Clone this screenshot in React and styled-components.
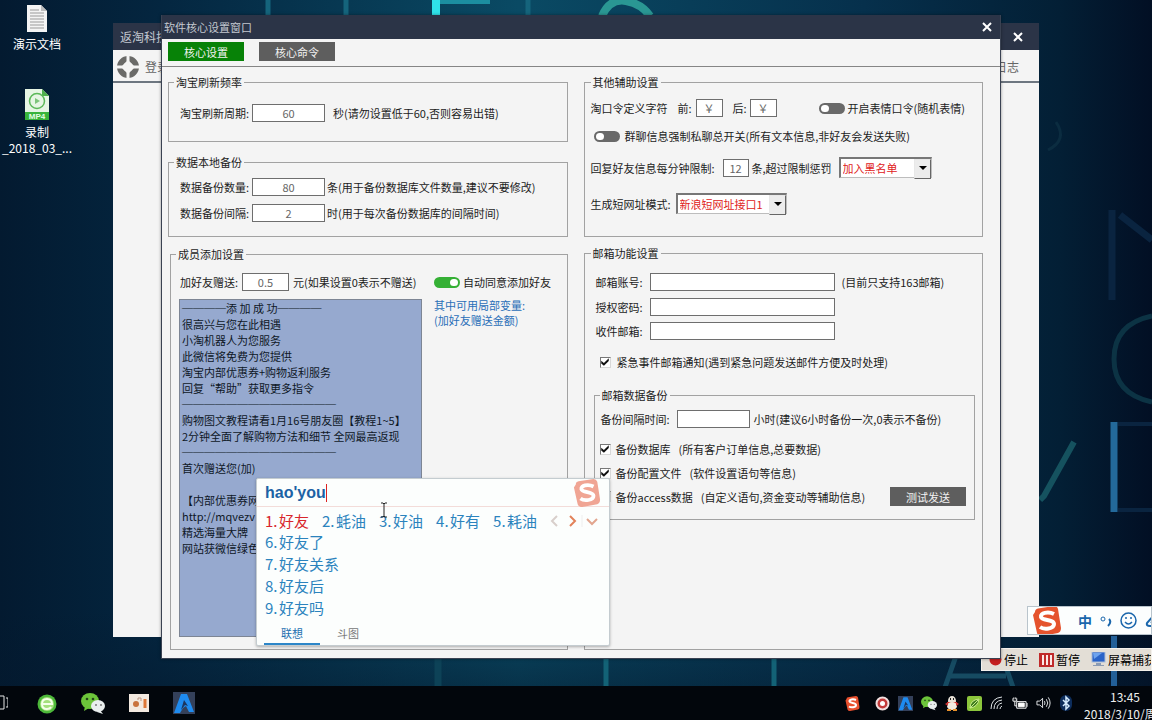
import React, { useState } from "react";
import styled, { createGlobalStyle, css } from "styled-components";

const TEMPLATE = `────添 加 成 功────
很高兴与您在此相遇
小淘机器人为您服务
此微信将免费为您提供
淘宝内部优惠券+购物返利服务
回复“帮助”获取更多指令
──────────────
购物图文教程请看1月16号朋友圈【教程1~5】
2分钟全面了解购物方法和细节 全网最高返现
──────────────
首次赠送您(加)

【内部优惠券网
http://mqvezv
精选海量大牌
网站获微信绿色`;

const candidates = ["好友", "蚝油", "好油", "好有", "耗油"];
const phrases = ["好友了", "好友关系", "好友后", "好友吗"];

/* Icons */
const SogouLogo = ({ size, color }) => (
  <svg width={size} height={size} viewBox="0 0 30 30">
    <path d="M3 6Q3 3 6 2.500L22 0Q25 0 26 3L29 22Q29 26 26 27L10 30Q6 30 5 27L1 9Z" fill={color} />
    <path
      d="M22 8C16 5 8 7 9 11C10 15 22 13 22 18C22 23 12 24 8 21"
      fill="none"
      stroke="#fff"
      strokeWidth="4"
    />
  </svg>
);

const WechatIcon = ({ size }) => (
  <svg width={size} height={size} viewBox="0 0 24 24">
    <ellipse cx="9" cy="10" rx="9" ry="8" fill="#6cc43a" />
    <path d="M4 15l-1 5 5-3z" fill="#6cc43a" />
    <circle cx="6" cy="8" r="1.300" fill="#24451a" />
    <circle cx="12" cy="8" r="1.300" fill="#24451a" />
    <ellipse cx="17" cy="15" rx="7" ry="6" fill="#e9eeee" />
    <path d="M19 19l3 4-6-2z" fill="#e9eeee" />
    <circle cx="15" cy="14" r="1" fill="#777" />
    <circle cx="20" cy="14" r="1" fill="#777" />
  </svg>
);

const ArrowAppIcon = ({ size }) => (
  <svg width={size} height={size} viewBox="0 0 22 22">
    <rect width="22" height="22" fill="#34405a" />
    <path d="M8 2h6l7 18h-5l-3-6-3 2-3 5H1z" fill="#1e8bf0" />
    <path d="M11 8l4 6-3-1-4 5z" fill="#1c3660" />
  </svg>
);

const DocIcon = () => (
  <svg width="20" height="27" viewBox="0 0 20 27">
    <path d="M0 0h14l6 6v21H0z" fill="#f4f4f4" />
    <path d="M14 0v6h6z" fill="#bcbcbc" />
    <path d="M3 5h9M3 8h14M3 11h14M3 14h14M3 17h14M3 20h14M3 23h14" stroke="#9a9a9a" />
  </svg>
);

const Mp4Icon = () => (
  <svg width="24" height="31" viewBox="0 0 24 31">
    <path d="M0 0h17l7 7v24H0z" fill="#e6f5e4" />
    <path d="M17 0v7h7z" fill="#4fae4c" />
    <path d="M0 23h24v8H0z" fill="#38b43a" />
    <circle cx="12" cy="12" r="7.500" fill="none" stroke="#5bb858" strokeWidth="1.500" />
    <path d="M10 9l5 3-5 3z" fill="#7cc47a" />
    <text x="12" y="30" fontSize="8" fontWeight="700" fill="#e6ffe6" textAnchor="middle" fontFamily="Liberation Sans, sans-serif">
      MP4
    </text>
  </svg>
);

/* Ring of four arcs around a square hole */
const LoginIcon = () => (
  <svg width="22" height="22" viewBox="0 0 22 22">
    <circle cx="11" cy="11" r="8" fill="none" stroke="#6a6a68" strokeWidth="6" />
    <path d="M11 0v22M0 11h22" stroke="#f4f4f4" strokeWidth="3" />
    <path d="M11 4l7 7-7 7-7-7z" fill="#f4f4f4" />
  </svg>
);

const CloseIcon = () => (
  <svg width="10" height="10" viewBox="0 0 10 10">
    <path d="M1 1l8 8M9 1l-8 8" stroke="#fff" strokeWidth="2" />
  </svg>
);

const Wallpaper = () => (
  <Backdrop viewBox="0 0 1152 720" preserveAspectRatio="none" aria-hidden="true">
    <defs>
      <linearGradient id="night" x1="0" y1="0" x2="1" y2="0">
        <stop offset="0" stopColor="#031a30" />
        <stop offset="0.140" stopColor="#042640" />
        <stop offset="0.450" stopColor="#0a4a64" />
        <stop offset="0.750" stopColor="#06304c" />
        <stop offset="0.920" stopColor="#031f35" />
        <stop offset="1" stopColor="#020f24" />
      </linearGradient>
      <linearGradient id="shade" x1="0" y1="0" x2="0" y2="1">
        <stop offset="0.850" stopColor="#04192e" stopOpacity="0" />
        <stop offset="1" stopColor="#04192e" stopOpacity="0.700" />
      </linearGradient>
    </defs>
    <rect width="1152" height="720" fill="url(#night)" />
    <rect width="1152" height="720" fill="url(#shade)" />
    <g fill="none">
      <path d="M436 0v16" stroke="#2fe3ea" strokeWidth="8" />
      <path d="M440 2h50" stroke="#1c8ea0" strokeWidth="4" />
      <path d="M268 0v16M346 0v16M528 0v16" stroke="#15647c" strokeWidth="5" />
      <path d="M602 16q8-18 24-15t24 15" stroke="#2a9793" strokeWidth="8" />
      <path d="M1112 210v90M1120 215l32 25" stroke="#0a2440" strokeWidth="7" />
      <path d="M1152 316q-38 8-38 43t38 43" stroke="#0c3344" strokeWidth="5" />
      <path d="M1114 422v90" stroke="#23699a" strokeWidth="7" />
      <path d="M1118 424h34M1118 510h34" stroke="#0a2440" strokeWidth="4" />
      <path d="M1040 500l4-4 30-54" stroke="#15525f" strokeWidth="6" />
      <path d="M1048 150q20-10 8-28" stroke="#0b2c40" strokeWidth="3" />
      <path d="M1114 636v54" stroke="#225f98" strokeWidth="6" />
      <path d="M606 656v34M774 656v34" stroke="#136276" strokeWidth="5" />
      <path d="M438 656v34" stroke="#0d4257" strokeWidth="7" />
      <path d="M944 690l12-34M1002 656l12 34M950 676h56" stroke="#164b62" strokeWidth="5" />
    </g>
  </Backdrop>
);

const NumberField = ({ label, value, width, labelWidth, suffix, gap }) => (
  <>
    <Label $w={labelWidth}>
      <span>{label}</span>
    </Label>
    <Field aria-label={label} defaultValue={value} $w={width} />
    <Text $left={gap}>{suffix}</Text>
  </>
);

const BlackSelect = ({ label, options, width }) => (
  <SelectBox $w={width}>
    <select aria-label={label}>
      {options.map((option) => (
        <option key={option}>{option}</option>
      ))}
    </select>
  </SelectBox>
);

const SettingsWindow = () => {
  const [autoAgree, setAutoAgree] = useState(true);

  return (
    <Dialog>
      <TitleBar>
        <span>软件核心设置窗口</span>
        <CloseButton aria-label="关闭">
          <CloseIcon />
        </CloseButton>
      </TitleBar>
      <Tabs>
        <FlatButton $active>核心设置</FlatButton>
        <FlatButton>核心命令</FlatButton>
      </Tabs>

      <Columns>
        <Column>
          <Group $pad="15px 10px 19px 5px">
            <legend>淘宝刷新频率</legend>
            <Row $left={6}>
              <NumberField label="淘宝刷新周期:" value="60" width={73} labelWidth={72} gap={8} suffix="秒(请勿设置低于60,否则容易出错)" />
            </Row>
          </Group>

          <Group $top={13} $pad="9px 10px 14px 5px">
            <legend>数据本地备份</legend>
            <Row $left={6}>
              <NumberField label="数据备份数量:" value="80" width={73} labelWidth={72} gap={2} suffix="条(用于备份数据库文件数量,建议不要修改)" />
            </Row>
            <Row $top={8} $left={6}>
              <NumberField label="数据备份间隔:" value="2" width={73} labelWidth={72} gap={2} suffix="时(用于每次备份数据库的间隔时间)" />
            </Row>
          </Group>

          <Group $top={10} $left={2} $grow $pad="12px 10px 12px 5px">
            <legend>成员添加设置</legend>
            <MemberGrid>
              <div>
                <Row $left={1}>
                  <NumberField label="加好友赠送:" value="0.5" width={47} labelWidth={62} gap={4} suffix="元(如果设置0表示不赠送)" />
                </Row>
                <Template aria-label="添加成功回复" rows={21} defaultValue={TEMPLATE} spellCheck={false} />
              </div>
              <div>
                <Row>
                  <CheckLabel $gap={3}>
                    <Switch type="checkbox" checked={autoAgree} onChange={(e) => setAutoAgree(e.target.checked)} />
                    自动同意添加好友
                  </CheckLabel>
                </Row>
                <Hint>
                  其中可用局部变量:
                  <br />
                  (加好友赠送金额)
                </Hint>
              </div>
            </MemberGrid>
          </Group>
        </Column>

        <Column>
          <Group $pad="10px 8px 22px 6px">
            <legend>其他辅助设置</legend>
            <Row>
              <Label $w={87}>淘口令定义字符</Label>
              <Label $w={18}>前:</Label>
              <Field aria-label="前" defaultValue="￥" $w={27} />
              <Label $w={17} $left={10}>
                后:
              </Label>
              <Field aria-label="后" defaultValue="￥" $w={27} />
              <CheckLabel $left={42} $gap={3}>
                <Switch type="checkbox" />
                开启表情口令(随机表情)
              </CheckLabel>
            </Row>
            <Row $top={10}>
              <CheckLabel $left={3} $gap={5}>
                <Switch type="checkbox" />
                群聊信息强制私聊总开关(所有文本信息,非好友会发送失败)
              </CheckLabel>
            </Row>
            <Row $top={12}>
              <Label $w={132}>回复好友信息每分钟限制:</Label>
              <Field aria-label="回复好友信息每分钟限制" defaultValue="12" $w={26} />
              <Label $w={87} $left={3}>
                条,超过限制惩罚
              </Label>
              <BlackSelect label="超过限制惩罚" options={["加入黑名单"]} width={93} />
            </Row>
            <Row $top={15}>
              <Label $w={85}>生成短网址模式:</Label>
              <BlackSelect label="生成短网址模式" options={["新浪短网址接口1"]} width={111} />
            </Row>
          </Group>

          <Group $top={9} $grow $pad="13px 7px 12px 6px">
            <legend>邮箱功能设置</legend>
            <Row $left={5}>
              <NumberField label="邮箱账号:" value="" width={185} labelWidth={54} gap={7} suffix="(目前只支持163邮箱)" />
            </Row>
            <Row $left={5} $top={7}>
              <NumberField label="授权密码:" value="" width={185} labelWidth={54} />
            </Row>
            <Row $left={5} $top={6}>
              <NumberField label="收件邮箱:" value="" width={185} labelWidth={54} />
            </Row>
            <Row $top={13}>
              <CheckLabel $left={9} $gap={6}>
                <Tick type="checkbox" defaultChecked />
                紧急事件邮箱通知(遇到紧急问题发送邮件方便及时处理)
              </CheckLabel>
            </Row>

            <Group $top={17} $left={3} $pad="8px 8px 13px 5px">
              <legend>邮箱数据备份</legend>
              <Row $left={1}>
                <NumberField label="备份间隔时间:" value="" width={73} labelWidth={76} gap={4} suffix="小时(建议6小时备份一次,0表示不备份)" />
              </Row>
              <Row $top={12}>
                <CheckLabel $gap={5}>
                  <Tick type="checkbox" defaultChecked />
                  <Pair>
                    <span>备份数据库</span>
                    <span>(所有客户订单信息,总要数据)</span>
                  </Pair>
                </CheckLabel>
              </Row>
              <Row $top={6}>
                <CheckLabel $gap={5}>
                  <Tick type="checkbox" defaultChecked />
                  <Pair>
                    <span>备份配置文件</span>
                    <span>(软件设置语句等信息)</span>
                  </Pair>
                </CheckLabel>
              </Row>
              <Row $top={5}>
                <CheckLabel $gap={5}>
                  <Tick type="checkbox" />
                  <Pair>
                    <span>备份access数据</span>
                    <span>(自定义语句,资金变动等辅助信息)</span>
                  </Pair>
                </CheckLabel>
                <FlatButton $push>测试发送</FlatButton>
              </Row>
            </Group>
          </Group>
        </Column>
      </Columns>
    </Dialog>
  );
};

const InputPanel = () => (
  <Ime>
    <ImeHeader>
      <Pinyin>hao'you</Pinyin>
      <SogouLogo size={28} color="#f0a594" />
    </ImeHeader>
    <CandidateRow>
      {candidates.map((word, i) => (
        <Candidate key={word} $active={i === 0}>
          <b>{i + 1}.</b>
          {word}
        </Candidate>
      ))}
      <Pager viewBox="0 0 48 12" aria-hidden="true">
        <path d="M7 1L2 6l5 5" stroke="#d8cfcb" strokeWidth="2" />
        <path d="M20 1l5 5-5 5" stroke="#e2825a" strokeWidth="2" />
        <path d="M32 0v12" stroke="#eee" />
        <path d="M37 4l5 5 5-5" stroke="#e2a58e" strokeWidth="2" />
      </Pager>
    </CandidateRow>
    <PhraseList>
      {phrases.map((word, i) => (
        <li key={word}>
          <Candidate>
            <b>{i + 6}.</b>
            {word}
          </Candidate>
        </li>
      ))}
    </PhraseList>
    <ImeTabs>
      <ImeTab $active>联想</ImeTab>
      <ImeTab>斗图</ImeTab>
    </ImeTabs>
  </Ime>
);

const Tray = () => (
  <TrayBox>
    <SogouLogo size={15} color="#e8502e" />
    <svg width="15" height="15" viewBox="0 0 15 15">
      <circle cx="7.500" cy="7.500" r="6" fill="#c33a3a" stroke="#f0dede" strokeWidth="2" />
      <circle cx="7.500" cy="7.500" r="2.500" fill="#fff" />
    </svg>
    <ArrowAppIcon size={15} />
    <WechatIcon size={16} />
    <svg width="14" height="16" viewBox="0 0 14 16">
      <ellipse cx="7" cy="6" rx="4" ry="5" fill="#e9e2d8" />
      <path d="M2 7h10v3H2z" fill="#d2352c" />
      <ellipse cx="7" cy="11" rx="5" ry="4" fill="#f1eadf" />
      <path d="M0 9l3-2v4zM14 9l-3-2v4z" fill="#c33" />
      <path d="M2 15h4M8 15h4" stroke="#e8902a" strokeWidth="2" />
      <path d="M5 4h1M8 4h1" stroke="#222" strokeWidth="2" />
    </svg>
    <svg width="15" height="15" viewBox="0 0 15 15">
      <rect width="15" height="15" rx="2" fill="#8cc63c" />
      <path d="M3 12q0-8 9-9-1 8-9 9l8-8" fill="#3f7d1e" stroke="#c9ec8c" />
    </svg>
    <svg width="14" height="14" viewBox="0 0 14 14" fill="none" stroke="#dfe3e6">
      <path d="M1 13Q1 2 12 1M4 13Q4 5 12 4M7 13Q7 8 12 7M10 13q0-2 2-3" />
    </svg>
    <svg width="16" height="13" viewBox="0 0 17 13" fill="none" stroke="#fff">
      <path d="M5 4.500h10v7H5zM16 6v4" />
      <path d="M7 6h6v4H7z" fill="#fff" />
      <path d="M1 1v3h4V1M3 4v5h2M2 0v2M4 0v2" />
    </svg>
    <svg width="16" height="14" viewBox="0 0 17 14" fill="none" stroke="#e8eaec">
      <path d="M1 5h3l3-3v10L4 9H1zM9 5q1 2 0 4M11 3q3 4 0 8M13 1q4 6 0 12" />
    </svg>
    <svg width="12" height="16" viewBox="0 0 12 16">
      <rect width="12" height="16" rx="6" fill="#0d2d5c" />
      <path d="M3 5l6 6-3 3V2l3 3-6 6" fill="none" stroke="#d5ebff" strokeWidth="1.500" />
    </svg>
    <Clock>
      <time>13:45</time>
      <span>2018/3/10/周</span>
    </Clock>
  </TrayBox>
);

const App = () => (
  <Desktop>
    <GlobalStyle />
    <Wallpaper />

    <Shortcuts>
      <Shortcut>
        <DocIcon />
        <span>演示文档</span>
      </Shortcut>
      <Shortcut>
        <Mp4Icon />
        <span>录制</span>
        <span>_2018_03_...</span>
      </Shortcut>
    </Shortcuts>

    <BackWindow>
      <BackTitle>
        <span>返淘科技</span>
        <CloseButton aria-label="关闭">
          <CloseIcon />
        </CloseButton>
      </BackTitle>
      <BackTools>
        <LoginIcon />
        <span>登录</span>
        <span>日志</span>
      </BackTools>
    </BackWindow>

    <Recorder>
      <RecorderButton>
        <svg width="13" height="13" viewBox="0 0 13 13">
          <circle cx="6.500" cy="6.500" r="6" fill="#c41f1f" />
        </svg>
        停止
      </RecorderButton>
      <RecorderButton>
        <svg width="15" height="14" viewBox="0 0 15 14">
          <rect width="15" height="14" fill="#c02a2a" />
          <path d="M4 2v10M8 2v10M12 2v10" stroke="#fbe9e6" strokeWidth="2" />
        </svg>
        暂停
      </RecorderButton>
      <RecorderButton>
        <svg width="15" height="15" viewBox="0 0 15 15">
          <rect x="1" width="13" height="10" fill="#2a63c8" stroke="#a9bcd8" />
          <path d="M2 1l9 0-8 6z" fill="#6ea3ee" />
          <path d="M5 11h5v2h3v1H2v-1h3z" fill="#8c9cb4" />
        </svg>
        屏幕捕获
      </RecorderButton>
    </Recorder>

    <SettingsWindow />
    <InputPanel />

    <ImeBar>
      <SogouLogo size={30} color="#e5532d" />
      <i />
      <button>中</button>
      <svg width="12" height="12" viewBox="0 0 12 12">
        <circle cx="3" cy="4" r="2" fill="none" stroke="#1a66ac" />
        <path d="M9 4q3 3-1 7" fill="none" stroke="#1a66ac" strokeWidth="2" />
      </svg>
      <svg width="17" height="17" viewBox="0 0 17 17" fill="none" stroke="#1a66ac" strokeWidth="1.500">
        <circle cx="8.500" cy="8.500" r="7.500" />
        <path d="M5 10q3.500 4 7 0M6 5v2M11 5v2" />
      </svg>
      <svg width="17" height="17" viewBox="0 0 17 17" fill="none" stroke="#1a66ac" strokeWidth="2">
        <path d="M9 3L2 11q-1 3 3 3h10M6 11l4-4" />
      </svg>
    </ImeBar>

    <Cursor viewBox="0 0 8 16" aria-hidden="true">
      <path d="M1 1h2l1 1 1-1h2M4 2v12M1 15h2l1-1 1 1h2" fill="none" stroke="#222" />
    </Cursor>

    <Taskbar>
      <svg width="8" height="18" viewBox="0 0 8 18" fill="none" stroke="#e6e6e6">
        <path d="M0 2h4v13H0M6 4h2v9H6" />
      </svg>
      <svg width="20" height="21" viewBox="0 0 20 21">
        <circle cx="10" cy="11" r="9.500" fill="#4db83a" />
        <circle cx="10" cy="11" r="7" fill="#a4e07c" />
        <path d="M5 11h10q0-5-5-5t-5 5 5 5q3 0 4-2" fill="none" stroke="#f4ffe9" strokeWidth="2" />
      </svg>
      <WechatIcon size={24} />
      <svg width="20" height="18" viewBox="0 0 20 18">
        <rect width="20" height="18" fill="#f3e9e0" />
        <circle cx="7" cy="10" r="3" fill="#c9733e" />
        <path d="M16 5v9" stroke="#dd7738" strokeWidth="3" />
        <path d="M9 6V4h3v3" stroke="#b98" fill="none" />
      </svg>
      <ArrowAppIcon size={22} />
      <Tray />
    </Taskbar>
  </Desktop>
);

// Styled Components
const GlobalStyle = createGlobalStyle`
  * {
    box-sizing: border-box;
  }

  body {
    margin: 0;
    overflow: hidden;
    background: #04233c;
  }

  body, button, input, select, textarea {
    font-family: "Noto Sans CJK SC", "Noto Sans", sans-serif;
    font-size: 11px;
    line-height: 14px;
  }
`;

const Desktop = styled.main`
  position: relative;
  height: 100vh;
  overflow: hidden;
  display: flex;
  flex-direction: column;
  color: #1c1c1c;
  white-space: nowrap;
`;

const Backdrop = styled.svg`
  position: absolute;
  inset: 0;
  width: 100%;
  height: 100%;
`;

const Shortcuts = styled.div`
  position: relative;
  flex: 1;
  display: flex;
  flex-direction: column;
  align-items: flex-start;
  gap: 37px;
  padding-top: 5px;
`;

const Shortcut = styled.div`
  width: 74px;
  display: flex;
  flex-direction: column;
  align-items: center;
  color: #fff;
  font-size: 12px;
  line-height: 16px;

  svg {
    margin-bottom: 4px;
  }
`;

const BackWindow = styled.section`
  position: absolute;
  top: 23px;
  left: 113px;
  right: 113px;
  bottom: 83px;
  background: #f4f4f4;
`;

const TitleBar = styled.header`
  display: flex;
  align-items: center;
  justify-content: space-between;
  height: 24px;
  padding: 0 8px 0 2px;
  background: #2b3447;
  color: #c3c8d0;
`;

const BackTitle = styled(TitleBar)`
  height: 27px;
  padding: 0 16px 0 7px;
  font-size: 12px;
`;

const CloseButton = styled.button`
  display: flex;
  padding: 0;
  border: none;
  background: none;
  cursor: pointer;
`;

const BackTools = styled.div`
  display: flex;
  align-items: center;
  gap: 6px;
  height: 33px;
  padding: 2px 20px 0 4px;
  border-bottom: 2px solid #6d7680;
  color: #666;
  font-size: 12px;

  span:last-child {
    margin-left: auto;
  }
`;

const Dialog = styled.section`
  position: absolute;
  top: 15px;
  left: 161px;
  right: 151px;
  border: 1px solid #3a4252;
  border-top: none;
  background: #f4f4f4;
  box-shadow: 0 0 3px rgba(0, 0, 0, 0.4);
`;

const Tabs = styled.nav`
  display: flex;
  align-items: flex-start;
  gap: 15px;
  height: 28px;
  padding: 3px 6px 0;
  border-bottom: 1px solid #858585;
`;

const FlatButton = styled.button`
  width: 76px;
  height: 19px;
  padding: 0;
  border: none;
  background: ${(props) => (props.$active ? "#078207" : "#5e5e5e")};
  color: #f2f2f2;
  cursor: pointer;
  ${(props) => props.$push && "margin-left: auto;"}
`;

const Columns = styled.div`
  display: grid;
  grid-template-columns: 1fr 1fr;
  gap: 16px;
  padding: 8px 17px 8px 6px;
`;

const Column = styled.div`
  display: flex;
  flex-direction: column;
  min-width: 0;
`;

const Group = styled.fieldset`
  min-width: 0;
  margin: ${(props) => props.$top || 0}px 0 0 ${(props) => props.$left || 0}px;
  padding: ${(props) => props.$pad};
  border: 1px solid #a2a2a2;
  ${(props) => props.$grow && "flex: 1;"}

  > legend {
    padding: 0 2px;
    line-height: 14px;
  }
`;

const Row = styled.div`
  display: flex;
  align-items: center;
  min-height: 18px;
  margin: ${(props) => props.$top || 0}px 0 0 ${(props) => props.$left || 0}px;
`;

const Label = styled.span`
  flex: 0 0 ${(props) => props.$w}px;
  margin-left: ${(props) => props.$left || 0}px;
`;

const Text = styled.span`
  margin-left: ${(props) => props.$left || 0}px;
`;

const Field = styled.input`
  width: ${(props) => props.$w}px;
  height: 18px;
  padding: 0;
  border: 1px solid #6e6e6e;
  background: #fff;
  color: #666;
  text-align: center;
`;

const CheckLabel = styled.label`
  display: flex;
  align-items: center;
  gap: ${(props) => props.$gap}px;
  margin-left: ${(props) => props.$left || 0}px;
`;

const Pair = styled.span`
  display: flex;
  gap: 8px;
`;

const Switch = styled.input`
  appearance: none;
  display: flex;
  width: 26px;
  height: 11px;
  margin: 0;
  padding: 2px;
  border-radius: 6px;
  background: #696969;

  &::before {
    content: "";
    width: 8px;
    height: 7px;
    border-radius: 4px;
    background: #fff;
  }

  &:checked {
    justify-content: flex-end;
    background: #35b035;
  }
`;

const Tick = styled.input`
  appearance: none;
  width: 11px;
  height: 11px;
  margin: 0;
  border: 1px solid #d8d8d8;
  border-top-color: #777;
  border-left-color: #777;
  background: #fff;

  &:checked::before {
    content: "";
    display: block;
    height: 9px;
    background: #111;
    clip-path: polygon(8% 35%, 38% 60%, 92% 8%, 92% 40%, 38% 92%, 8% 66%);
  }
`;

const SelectBox = styled.span`
  position: relative;
  width: ${(props) => props.$w}px;

  select {
    appearance: none;
    display: block;
    width: 100%;
    height: 21px;
    padding: 0 18px 0 2px;
    border: 1px solid #bdbdbd;
    border-top: 2px solid #777;
    border-left: 2px solid #777;
    border-radius: 0;
    background: #fff;
    color: #e02020;
  }

  &::before {
    content: "";
    position: absolute;
    top: 2px;
    right: 1px;
    width: 15px;
    height: 18px;
    border: 1px solid #e8e8e8;
    border-right-color: #666;
    border-bottom-color: #666;
    background: #ececec;
    pointer-events: none;
  }

  &::after {
    content: "";
    position: absolute;
    top: 9px;
    right: 5px;
    border: 4px solid transparent;
    border-top-color: #000;
    border-bottom: none;
    pointer-events: none;
  }
`;

const MemberGrid = styled.div`
  display: grid;
  grid-template-columns: 243px 1fr;
  gap: 12px;
  margin-left: 3px;
`;

const Template = styled.textarea`
  display: block;
  width: 100%;
  margin: 8px 0 0;
  padding: 0 2px;
  border: 1px solid #7d8594;
  background: #96a9cf;
  color: #0e1726;
  line-height: 16px;
  resize: none;
  overflow: hidden;
`;

const Hint = styled.p`
  margin: 7px 0 0;
  color: #2a6fb8;
  line-height: 15px;
`;

const Ime = styled.section`
  position: absolute;
  top: 478px;
  left: 256px;
  width: 354px;
  border: 1px solid #c4ccd0;
  border-radius: 2px;
  background: #fcfefd;
  box-shadow: 0 1px 3px rgba(0, 0, 0, 0.3);
`;

const ImeHeader = styled.div`
  display: flex;
  align-items: center;
  justify-content: space-between;
  height: 28px;
  padding: 0 8px;
  border-bottom: 1px solid #f3dcd9;
`;

const Pinyin = styled.span`
  border-right: 1px solid #d22;
  color: #1c62a5;
  font: bold 16px/18px "Liberation Sans", Arial, sans-serif;
`;

const CandidateRow = styled.div`
  display: flex;
  align-items: center;
  gap: 13px;
  height: 28px;
  padding-left: 8px;
`;

const Candidate = styled.button`
  display: flex;
  padding: 0;
  border: none;
  background: none;
  color: ${(props) => (props.$active ? "#d8262c" : "#2b83bd")};
  font-size: 15px;
  line-height: 22px;

  b {
    width: 14px;
    font-weight: 400;
    text-align: left;
  }
`;

const Pager = styled.svg`
  width: 48px;
  height: 12px;
  fill: none;
`;

const PhraseList = styled.ul`
  margin: -4px 0 0;
  padding: 0 8px;
  list-style: none;
`;

const ImeTabs = styled.div`
  display: flex;
  padding: 4px 7px 0;
`;

const ImeTab = styled.button`
  width: 56px;
  height: 22px;
  padding: 0;
  border: none;
  border-bottom: 2px solid transparent;
  background: none;
  color: #777;

  ${(props) =>
    props.$active &&
    css`
      border-color: #2d86c8;
      color: #1c6fb0;
    `}
`;

const ImeBar = styled.div`
  position: absolute;
  top: 606px;
  right: 0;
  width: 125px;
  height: 29px;
  display: flex;
  align-items: center;
  gap: 8px;
  padding-left: 4px;
  overflow: hidden;
  border: 1px solid #b9c4cc;
  background: #fcfefe;

  svg {
    flex-shrink: 0;
  }

  i {
    width: 1px;
    height: 27px;
    background: #f1cdc6;
  }

  button {
    padding: 0;
    border: none;
    background: none;
    color: #1a66ac;
    font-size: 14px;
    font-weight: 700;
    line-height: 18px;
  }
`;

const Recorder = styled.div`
  position: absolute;
  top: 648px;
  right: 0;
  width: 171px;
  height: 23px;
  display: flex;
  align-items: center;
  gap: 11px;
  padding-left: 7px;
  overflow: hidden;
  border: 1px solid #f4f1ec;
  background: #e3ded6;
`;

const RecorderButton = styled.button`
  flex-shrink: 0;
  display: flex;
  align-items: center;
  gap: 2px;
  padding: 0;
  border: none;
  background: none;
  font-size: 12px;
`;

const Cursor = styled.svg`
  position: absolute;
  top: 502px;
  left: 380px;
  width: 8px;
  height: 16px;
`;

const Taskbar = styled.footer`
  position: relative;
  display: flex;
  align-items: center;
  gap: 24px;
  height: 34px;
  background: #02060c;

  > svg {
    flex-shrink: 0;
  }

  > svg:first-child {
    margin-right: 5px;
  }
`;

const TrayBox = styled.div`
  display: flex;
  align-items: center;
  gap: 8px;
  margin-left: auto;

  > svg:first-child {
    margin-right: 7px;
  }
`;

const Clock = styled.div`
  flex: 0 0 68px;
  display: flex;
  flex-direction: column;
  margin-left: 4px;
  padding-top: 3px;
  overflow: hidden;
  color: #f0f0f0;
  font-size: 12px;
  line-height: 17px;

  time {
    padding-left: 26px;
  }
`;

export default App;
